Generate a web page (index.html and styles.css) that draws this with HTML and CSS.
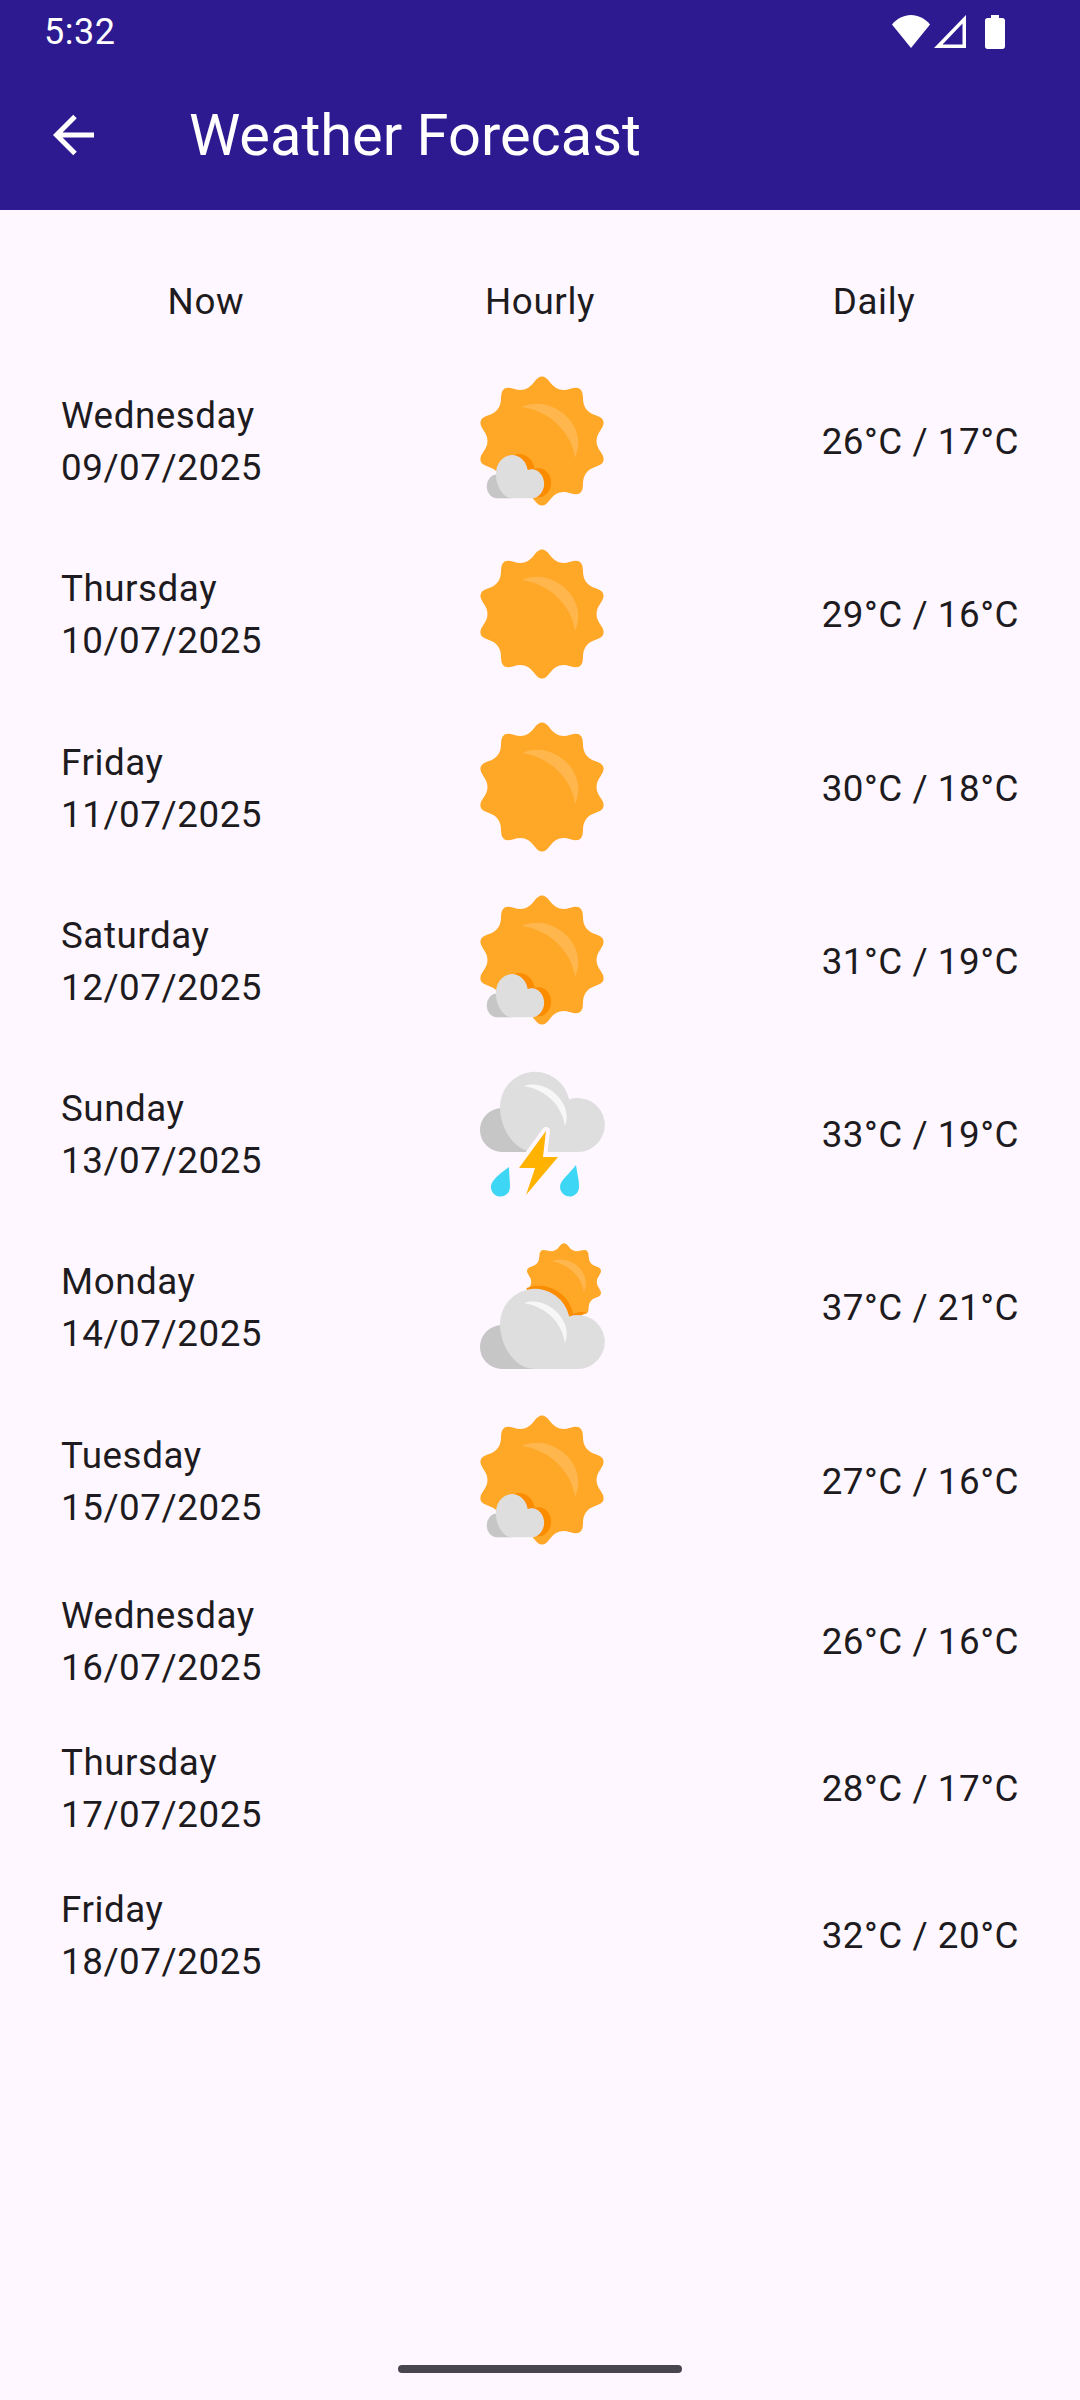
FILE: index.html
```html
<!DOCTYPE html>
<html lang="en">
<head>
    <meta charset="utf-8"/>
    <meta name="viewport" content="width=device-width, initial-scale=1.0"/>
    <title>Weather Forecast</title>
    <link rel="stylesheet" href="styles.css">
</head>
<body>
<svg class="icon-defs" width="0" height="0">
    <defs>
        <g id="sun">
            <path class="sun-body" transform="scale(1.03)" d="M-7.55,-57.3 Q0,-68 7.55,-57.3 Q15.1,-46.6 27.55,-50.8 Q40,-55 39.8,-41.9 Q39.6,-28.8 52.15,-24.9 Q64.7,-21 56.85,-10.5 Q49,0 56.85,10.5 Q64.7,21 52.15,24.9 Q39.6,28.8 39.8,41.9 Q40,55 27.55,50.8 Q15.1,46.6 7.55,57.3 Q0,68 -7.55,57.3 Q-15.1,46.6 -27.55,50.8 Q-40,55 -39.8,41.9 Q-39.6,28.8 -52.15,24.9 Q-64.7,21 -56.85,10.5 Q-49,0 -56.85,-10.5 Q-64.7,-21 -52.15,-24.9 Q-39.6,-28.8 -39.8,-41.9 Q-40,-55 -27.55,-50.8 Q-15.1,-46.6 -7.55,-57.3Z"/>
            <path class="sun-shine" d="M-20,-34 C10,-48 48,-15 33,17 C30,-8 8,-30 -20,-34Z"/>
        </g>
        <g id="cloud">
            <circle class="cloud-shade" cx="-33" cy="23" r="22"/>
            <path class="cloud-shade" d="M-33,45 H0 V10 H-33Z"/>
            <path class="cloud-body" d="M0,45 C-20,45 -35,22 -35,0 A35,35 0 0 1 34.2,-7.6 A27,27 0 1 1 43,45Z"/>
        </g>
        <path id="cloud-outline" d="M0,45 C-20,45 -35,22 -35,0 A35,35 0 0 1 34.2,-7.6 A27,27 0 1 1 43,45Z"/>
        <clipPath id="sun-clip"><circle r="64"/></clipPath>
        <clipPath id="small-sun-clip"><circle cx="22" cy="-25" r="38"/></clipPath>

        <g id="sun-small-cloud">
            <use href="#sun"/>
            <g clip-path="url(#sun-clip)">
                <use href="#cloud-outline" class="cloud-cast" transform="translate(-23,32) scale(.46,.54)"/>
            </g>
            <use href="#cloud" transform="translate(-30,33) scale(.46,.54)"/>
        </g>
        <g id="sun-big-cloud">
            <use href="#sun" transform="translate(22,-25) scale(.6)"/>
            <g clip-path="url(#small-sun-clip)">
                <use href="#cloud-outline" class="cloud-cast" transform="translate(-3,14)"/>
            </g>
            <use href="#cloud" transform="translate(-7,17)"/>
            <path class="cloud-gloss" d="M-18,-48 C5,-56 32,-30 23,-8 C20,-28 5,-44 -18,-48Z" transform="translate(0,44)"/>
        </g>
        <g id="storm">
            <use href="#cloud" transform="translate(-7,-27)"/>
            <path class="cloud-gloss" d="M-18,-48 C5,-56 32,-30 23,-8 C20,-28 5,-44 -18,-48Z"/>
            <polygon class="bolt bolt-halo" points="4,-3 -23,34 -7,34 -16,61 16,23 1,23"/>
            <polygon class="bolt" points="4,-3 -23,34 -7,34 -16,61 16,23 1,23"/>
            <path class="drop" d="M-33,33 C-33,40 -32,46 -32,53 A9.5,9.5 0 1 1 -50.5,50 C-48,44 -40,38 -33,33Z"/>
            <path class="drop" d="M34,31 C35,39 37,45 37,52 A9.5,9.5 0 1 1 18.5,50 C21,44 29,38 34,31Z"/>
        </g>
    </defs>
</svg>

<div class="page">
    <div class="status-bar">
        <span class="clock">5:32</span>
        <div class="status-icons">
            <svg class="wifi" width="38" height="33" viewBox="0 0 38 33"><path d="M19 33 0 9.500C5 3.500 12 0 19 0s14 3.500 19 9.500z"/></svg>
            <svg class="signal" width="32" height="33" viewBox="0 0 32 33"><path d="M32 0v33H0zM28.500 8.500 8.500 29.500h20z" fill-rule="evenodd"/></svg>
            <svg class="battery" width="20" height="34" viewBox="0 0 20 34"><path d="M6 0h8v3h3.500c1.400 0 2.500 1.100 2.500 2.500V31.500c0 1.400-1.100 2.500-2.500 2.500h-15C1.100 34 0 32.900 0 31.500V5.500C0 4.100 1.100 3 2.500 3H6z"/></svg>
        </div>
    </div>

    <header class="app-bar">
        <svg class="back-arrow" width="42" height="42" viewBox="0 0 42 42"><path d="M41 21H4M22 2.500 3.500 21 22 39.500"/></svg>
        <h1>Weather Forecast</h1>
    </header>

    <nav class="tabs">
        <span>Now</span>
        <span>Hourly</span>
        <span>Daily</span>
    </nav>

    <main class="forecast">
        <div class="day has-icon">
            <div class="date">Wednesday<br>09/07/2025</div>
            <svg class="weather-icon" viewBox="-66 -66 132 132"><use href="#sun-small-cloud"/></svg>
            <div class="temps">26°C / 17°C</div>
        </div>
        <div class="day has-icon">
            <div class="date">Thursday<br>10/07/2025</div>
            <svg class="weather-icon" viewBox="-66 -66 132 132"><use href="#sun"/></svg>
            <div class="temps">29°C / 16°C</div>
        </div>
        <div class="day has-icon">
            <div class="date">Friday<br>11/07/2025</div>
            <svg class="weather-icon" viewBox="-66 -66 132 132"><use href="#sun"/></svg>
            <div class="temps">30°C / 18°C</div>
        </div>
        <div class="day has-icon">
            <div class="date">Saturday<br>12/07/2025</div>
            <svg class="weather-icon" viewBox="-66 -66 132 132"><use href="#sun-small-cloud"/></svg>
            <div class="temps">31°C / 19°C</div>
        </div>
        <div class="day has-icon">
            <div class="date">Sunday<br>13/07/2025</div>
            <svg class="weather-icon" viewBox="-66 -66 132 132"><use href="#storm"/></svg>
            <div class="temps">33°C / 19°C</div>
        </div>
        <div class="day has-icon">
            <div class="date">Monday<br>14/07/2025</div>
            <svg class="weather-icon" viewBox="-66 -66 132 132"><use href="#sun-big-cloud"/></svg>
            <div class="temps">37°C / 21°C</div>
        </div>
        <div class="day has-icon">
            <div class="date">Tuesday<br>15/07/2025</div>
            <svg class="weather-icon" viewBox="-66 -66 132 132"><use href="#sun-small-cloud"/></svg>
            <div class="temps">27°C / 16°C</div>
        </div>
        <div class="day">
            <div class="date">Wednesday<br>16/07/2025</div>
            <div class="temps">26°C / 16°C</div>
        </div>
        <div class="day">
            <div class="date">Thursday<br>17/07/2025</div>
            <div class="temps">28°C / 17°C</div>
        </div>
        <div class="day">
            <div class="date">Friday<br>18/07/2025</div>
            <div class="temps">32°C / 20°C</div>
        </div>
    </main>

    <div class="home-indicator"></div>
</div>
</body>
</html>
```

FILE: styles.css
```css
* {
    box-sizing: border-box;
}

body {
    margin: 0;
    background-color: #fef7ff;
    color: #1d1b20;
    font-family: Roboto, "Noto Sans", sans-serif;
}

.icon-defs {
    display: block;
    height: 0;
}

.page {
    display: flex;
    flex-direction: column;
    height: 2400px;
}

.status-bar {
    display: flex;
    justify-content: space-between;
    align-items: center;
    height: 63px;
    padding: 0 75px 0 44px;
    background-color: #2e1a90;
    color: #fff;
}

.clock {
    font-size: 36px;
    letter-spacing: 0.5px;
}

.status-icons {
    display: flex;
    align-items: center;
}

.status-icons svg {
    fill: #fff;
}

.wifi {
    margin-right: 4px;
}

.signal {
    margin-right: 19px;
}

.app-bar {
    display: flex;
    align-items: center;
    height: 147px;
    padding: 0 0 4px 53px;
    background-color: #2e1a90;
    color: #fff;
}

.app-bar h1 {
    margin: 0 0 0 94px;
    font-size: 57.75px;
    font-weight: 400;
}

.back-arrow {
    fill: none;
    stroke: #fff;
    stroke-width: 5;
}

.tabs {
    display: grid;
    grid-template-columns: repeat(3, 334px);
    justify-content: center;
    padding-top: 66px;
    height: 144px;
    font-size: 36.75px;
    line-height: 52px;
    letter-spacing: 0.66px;
    text-align: center;
}

.day {
    display: grid;
    grid-template-columns: 1fr auto 1fr;
    align-items: center;
    height: 147px;
    padding: 0 61px;
    font-size: 36.75px;
    line-height: 52px;
    letter-spacing: 0.55px;
}

.day.has-icon {
    height: 173.25px;
}

.date,
.temps {
    padding-top: 3px;
}

.temps {
    grid-column: 3;
    text-align: right;
}

.weather-icon {
    display: block;
    width: 132px;
    height: 132px;
    margin-left: 4px;
}

.sun-body {
    fill: #ffa726;
}

.sun-shine {
    fill: #ffb74d;
}

.cloud-body {
    fill: #dedede;
}

.cloud-shade {
    fill: #c6c6c6;
}

.cloud-cast {
    fill: #fb8c00;
}

.cloud-gloss {
    fill: #f7f7f7;
}

.bolt {
    fill: #ffb300;
}

.bolt-halo {
    stroke: #fef7ff;
    stroke-width: 8;
    stroke-linejoin: round;
}

.drop {
    fill: #3dd6f5;
}

.forecast {
    flex: 1;
}

.home-indicator {
    align-self: center;
    width: 284px;
    height: 8px;
    margin-bottom: 27px;
    border-radius: 4px;
    background-color: #49454f;
}
```
